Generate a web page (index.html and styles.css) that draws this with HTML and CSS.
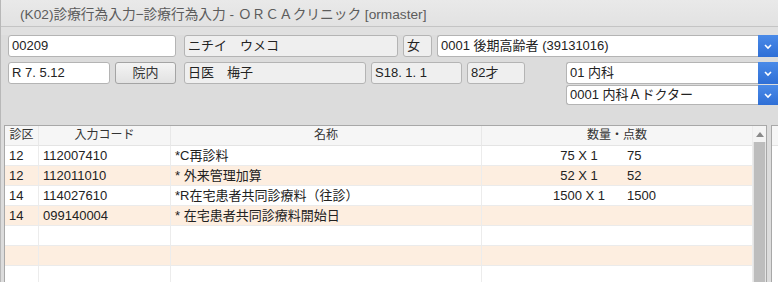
FILE: index.html
```html
<!DOCTYPE html>
<html lang="ja">
<head>
<meta charset="utf-8">
<title>K02 診療行為入力</title>
<link rel="stylesheet" href="styles.css">
</head>
<body>
<div class="window">
  <div class="titlebar"><span class="title">(K02)診療行為入力−診療行為入力 - ＯＲＣＡクリニック [ormaster]</span></div>
  <div class="toolbar"></div>
  <div class="form">
    <div class="row r1">
      <div class="field edit w-id">00209</div>
      <div class="field ro w-kana">ニチイ　ウメコ</div>
      <div class="field ro w-sex">女</div>
      <div class="select w-hoken"><span class="sel-text">0001 後期高齢者 (39131016)</span><span class="sel-btn"><svg width="10" height="7" viewBox="0 0 10 7"><path d="M2 2 L5 5 L8 2" fill="none" stroke="#fff" stroke-width="1.6"/></svg></span></div>
    </div>
    <div class="row r2">
      <div class="field edit w-date">R 7. 5.12</div>
      <div class="button w-btn">院内</div>
      <div class="field ro w-name">日医　梅子</div>
      <div class="field ro w-birth">S18. 1. 1</div>
      <div class="field ro w-age">82才</div>
      <div class="sel-stack">
        <div class="select w-ka"><span class="sel-text">01 内科</span><span class="sel-btn"><svg width="10" height="7" viewBox="0 0 10 7"><path d="M2 2 L5 5 L8 2" fill="none" stroke="#fff" stroke-width="1.6"/></svg></span></div>
        <div class="select w-ka small"><span class="sel-text">0001 内科Ａドクター</span><span class="sel-btn"><svg width="10" height="7" viewBox="0 0 10 7"><path d="M2 2 L5 5 L8 2" fill="none" stroke="#fff" stroke-width="1.6"/></svg></span></div>
      </div>
    </div>
  </div>
  <div class="table-zone">
    <div class="table-frame">
      <div class="grid">
        <div class="hcell">診区</div>
        <div class="hcell">入力コード</div>
        <div class="hcell">名称</div>
        <div class="hcell last">数量・点数</div>

        <div class="cell">12</div><div class="cell">112007410</div><div class="cell">*C再診料</div><div class="cell last qty"><span class="q">75 X 1</span><span class="p">75</span></div>
        <div class="cell alt">12</div><div class="cell alt">112011010</div><div class="cell alt">* 外来管理加算</div><div class="cell alt last qty"><span class="q">52 X 1</span><span class="p">52</span></div>
        <div class="cell">14</div><div class="cell">114027610</div><div class="cell">*R在宅患者共同診療料（往診）</div><div class="cell last qty"><span class="q">1500 X 1</span><span class="p">1500</span></div>
        <div class="cell alt">14</div><div class="cell alt">099140004</div><div class="cell alt">* 在宅患者共同診療料開始日</div><div class="cell alt last"></div>
        <div class="cell"></div><div class="cell"></div><div class="cell"></div><div class="cell last"></div>
        <div class="cell alt"></div><div class="cell alt"></div><div class="cell alt"></div><div class="cell alt last"></div>
        <div class="cell"></div><div class="cell"></div><div class="cell"></div><div class="cell last"></div>
      </div>
      <div class="vscroll">
        <div class="arrow"><svg width="8" height="5" viewBox="0 0 8 5"><path d="M0 5 L4 0 L8 5 Z" fill="#8a8a8a"/></svg></div>
        <div class="thumb"></div>
      </div>
    </div>
    <div class="side-frame">
      <div class="side-head"></div>
    </div>
  </div>
</div>
</body>
</html>
```

FILE: styles.css
```css
* { box-sizing: border-box; }
html, body { margin: 0; padding: 0; }
body {
  width: 778px;
  height: 282px;
  overflow: hidden;
  background: #dcdcdc;
  font-family: "Liberation Sans", "Noto Sans CJK JP", sans-serif;
  color: #222;
}
.window {
  height: 282px;
  border-left: 1px solid #b8b8b8;
  display: flex;
  flex-direction: column;
}
.titlebar {
  height: 27px;
  background: linear-gradient(#e9e9e9, #e2e2e2);
  border-bottom: 1px solid #c4c4c4;
  padding-left: 19px;
  display: flex;
  align-items: center;
}
.title {
  font-size: 13.7px;
  color: #5c5c5c;
}
.toolbar {
  height: 8px;
  background: #e0e0e0;
}
.form {
  padding-left: 7px;
  display: flex;
  flex-direction: column;
  gap: 5px;
}
.row {
  display: flex;
  align-items: flex-start;
}
.field {
  height: 22px;
  border: 1px solid #b4b4b4;
  border-radius: 3px;
  font-size: 13px;
  line-height: 20px;
  padding-left: 3px;
  white-space: nowrap;
  overflow: hidden;
}
.edit { background: #fff; }
.ro { background: #efefef; }
.button {
  height: 22px;
  border: 1px solid #a4a4a4;
  border-radius: 3px;
  background: linear-gradient(#f4f4f4, #e2e2e2);
  font-size: 13px;
  line-height: 20px;
  text-align: center;
  color: #333;
}
.select {
  height: 22px;
  display: flex;
  background: #fff;
  border: 1px solid #b4b4b4;
  border-right: none;
  border-radius: 3px 0 0 3px;
}
.select.small { height: 20px; }
.sel-text {
  flex: 1;
  font-size: 13px;
  line-height: 20px;
  padding-left: 3px;
  white-space: nowrap;
}
.select.small .sel-text { line-height: 18px; }
.sel-btn {
  width: 20px;
  margin-top: -1px;
  margin-bottom: -1px;
  background: linear-gradient(#4a8ae8, #2f6fd6);
  display: flex;
  align-items: center;
  justify-content: center;
}
.sel-stack {
  display: flex;
  flex-direction: column;
  gap: 1px;
}

.w-id { width: 168px; margin-right: 8px; }
.w-kana { width: 214px; margin-right: 5px; }
.w-sex { width: 29px; margin-right: 5px; }
.w-hoken { width: 341px; }
.w-date { width: 102px; margin-right: 5px; }
.w-btn { width: 61px; margin-right: 8px; }
.w-name { width: 182px; margin-right: 5px; }
.w-birth { width: 91px; margin-right: 5px; }
.w-age { width: 58px; margin-right: 41px; }
.w-ka { width: 212px; }

.table-zone {
  margin-top: 20px;
  flex: 1;
  display: flex;
  padding-left: 3px;
  min-height: 0;
}
.table-frame {
  width: 763px;
  border: 1px solid #a8a8a8;
  border-bottom: none;
  display: flex;
  background: #fff;
}
.grid {
  flex: 1;
  display: grid;
  grid-template-columns: 34px 132px 311px 1fr;
  grid-auto-rows: 20px;
  align-content: start;
}
.hcell {
  background: #f6f6f6;
  border-bottom: 1px solid #e4e4e4;
  border-right: 1px solid #e8e8e8;
  font-size: 12px;
  color: #333;
  text-align: center;
  line-height: 19px;
}
.cell {
  border-bottom: 1px solid #ebebeb;
  border-right: 1px solid #ececec;
  font-size: 13px;
  line-height: 19px;
  padding-left: 4px;
  white-space: nowrap;
  color: #222;
}
.last { border-right: none; }
.alt { background: #fdeee0; }
.qty { display: flex; padding-left: 0; }
.q {
  margin-left: 49px;
  width: 96px;
  text-align: center;
}
.p { margin-left: 0; }
.vscroll {
  width: 14px;
  display: flex;
  flex-direction: column;
  background: #e4e4e4;
  border-left: 1px solid #ececec;
}
.arrow {
  height: 16px;
  background: #f4f4f4;
  display: flex;
  justify-content: center;
  align-items: center;
}
.thumb {
  flex: 1;
  margin: 0 1px;
  background: #bdbdbd;
}
.side-frame {
  margin-left: 4px;
  flex: 1;
  border: 1px solid #a8a8a8;
  border-right: none;
  border-bottom: none;
  background: #fff;
}
.side-head {
  height: 20px;
  background: #f6f6f6;
  border-bottom: 1px solid #e4e4e4;
}
```
